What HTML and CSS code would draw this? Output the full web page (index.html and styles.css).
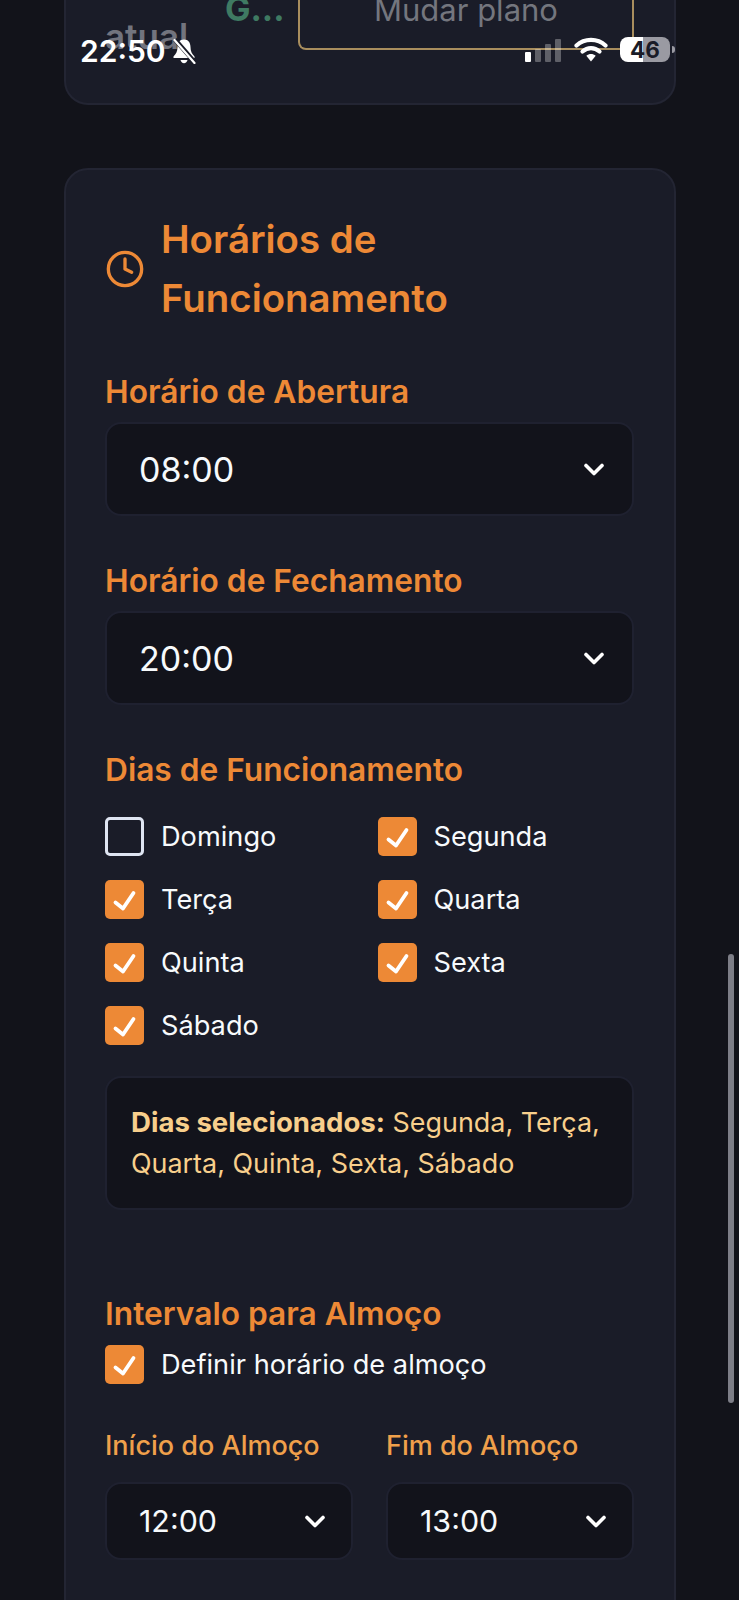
FILE: index.html
```html
<!DOCTYPE html>
<html lang="pt-BR">
<head>
  <meta charset="UTF-8" />
  <meta name="viewport" content="width=device-width, initial-scale=1.0"/>
  <title>Horários de Funcionamento</title>
  <link rel="stylesheet" href="styles.css">
</head>
<body>

  <svg class="defs" aria-hidden="true">
    <symbol id="tick" viewBox="0 0 39 39">
      <path d="M10.5 22.500l7.500 6 10.500-15.500" fill="none" stroke="#fff" stroke-width="3.800" stroke-linecap="round" stroke-linejoin="round"/>
    </symbol>
    <symbol id="chevron" viewBox="0 0 20 13">
      <path d="M2 2.500l8 8 8-8" fill="none" stroke="#fff" stroke-width="3.600" stroke-linecap="round" stroke-linejoin="round"/>
    </symbol>
  </svg>

  <div class="status-bar">
    <div class="status-left">
      <span class="status-time">22:50</span>
      <svg class="bell" viewBox="0 0 24 26">
        <path d="M12 1.500c-4.500 0-6.500 3.500-6.500 7.500 0 4.500-1.500 7-4 9.500v1.500h21v-1.500c-2.500-2.500-4-5-4-9.500 0-4-2-7.500-6.500-7.500z" fill="#fff"/>
        <path d="M8.500 22h7c-.4 2-1.800 3.200-3.500 3.200s-3.100-1.200-3.500-3.200z" fill="#fff"/>
        <path d="M3 1.500l20 23" stroke="#1a1c28" stroke-width="4.500"/>
        <path d="M2.500 2l20 23" stroke="#fff" stroke-width="2.200" stroke-linecap="round"/>
      </svg>
    </div>
    <div class="status-right">
      <div class="signal">
        <i class="bar bar-1"></i>
        <i class="bar bar-2"></i>
        <i class="bar bar-3"></i>
        <i class="bar bar-4"></i>
      </div>
      <svg class="wifi" viewBox="0 0 34 25">
        <path d="M2.500 8.500c8-7.500 21-7.500 29 0" fill="none" stroke="#fff" stroke-width="4.200" stroke-linecap="round"/>
        <path d="M8.500 14.500c5-4.500 12-4.500 17 0" fill="none" stroke="#fff" stroke-width="4.200" stroke-linecap="round"/>
        <path d="M12.300 18.800c2.800-2.300 6.600-2.300 9.400 0L17 24.500z" fill="#fff"/>
      </svg>
      <div class="battery"><span>46</span></div>
      <i class="battery-nub"></i>
    </div>
  </div>

  <div class="scrollbar"></div>

  <main class="page">

    <section class="card card-plan">
      <div class="plan-row">
        <span class="plan-current">atual</span>
        <span class="plan-status">G...</span>
        <div class="plan-btn">Mudar plano</div>
      </div>
    </section>

    <section class="card card-hours">
      <div class="card-title">
        <svg class="clock" viewBox="0 0 24 24" fill="none" stroke="#ed8936" stroke-width="2" stroke-linecap="round" stroke-linejoin="round">
          <circle cx="12" cy="12" r="10"/>
          <path d="M12 6v6l4 2"/>
        </svg>
        <h2>Horários de Funcionamento</h2>
      </div>

      <div class="field">
        <label class="field-label">Horário de Abertura</label>
        <div class="select">
          <span>08:00</span>
          <svg class="chevron"><use href="#chevron"/></svg>
        </div>
      </div>

      <div class="field">
        <label class="field-label">Horário de Fechamento</label>
        <div class="select">
          <span>20:00</span>
          <svg class="chevron"><use href="#chevron"/></svg>
        </div>
      </div>

      <div class="field">
        <label class="field-label">Dias de Funcionamento</label>
        <div class="days-grid">
          <div class="check-row"><span class="box"></span>Domingo</div>
          <div class="check-row"><span class="box checked"><svg><use href="#tick"/></svg></span>Segunda</div>
          <div class="check-row"><span class="box checked"><svg><use href="#tick"/></svg></span>Terça</div>
          <div class="check-row"><span class="box checked"><svg><use href="#tick"/></svg></span>Quarta</div>
          <div class="check-row"><span class="box checked"><svg><use href="#tick"/></svg></span>Quinta</div>
          <div class="check-row"><span class="box checked"><svg><use href="#tick"/></svg></span>Sexta</div>
          <div class="check-row"><span class="box checked"><svg><use href="#tick"/></svg></span>Sábado</div>
        </div>
        <div class="days-info">
          <strong>Dias selecionados:</strong> Segunda, Terça, Quarta, Quinta, Sexta, Sábado
        </div>
      </div>

      <div class="lunch">
        <label class="field-label lunch-label">Intervalo para Almoço</label>
        <div class="check-row"><span class="box checked"><svg><use href="#tick"/></svg></span>Definir horário de almoço</div>
        <div class="lunch-grid">
          <div>
            <label class="sub-label">Início do Almoço</label>
            <div class="select select-small">
              <span>12:00</span>
              <svg class="chevron"><use href="#chevron"/></svg>
            </div>
          </div>
          <div>
            <label class="sub-label">Fim do Almoço</label>
            <div class="select select-small">
              <span>13:00</span>
              <svg class="chevron"><use href="#chevron"/></svg>
            </div>
          </div>
        </div>
      </div>
    </section>

  </main>

</body>
</html>
```

FILE: styles.css
```css
:root {
  --bg-color: #12131a;
  --card-bg: #1a1c28;
  --card-border: #232533;
  --select-bg: #12131b;
  --select-border: #1f2130;
  --orange: #ed8936;
  --orange-light: #f0a04b;
  --info-text: #f8cf8c;
  --text-color: #f7fafc;
}

* {
  box-sizing: border-box;
}

html, body {
  margin: 0;
  padding: 0;
  height: 1600px;
  overflow: hidden;
}

body {
  position: relative;
  font-family: Inter, 'Noto Sans', sans-serif;
  background: var(--bg-color);
  color: var(--text-color);
}

.defs {
  position: absolute;
  width: 0;
  height: 0;
}

.page {
  display: flex;
  flex-direction: column;
  gap: 63px;
  padding: 0 63px 0 64px;
}

.card {
  background: var(--card-bg);
  border: 2px solid var(--card-border);
  border-radius: 24px;
}

/* plan card, scrolled mostly out of view */
.card-plan {
  height: 105px;
  border-top: none;
  border-radius: 0 0 24px 24px;
  padding: 0 40px 0 39px;
  overflow: hidden;
}

.plan-row {
  display: flex;
  align-items: flex-end;
  height: 50px;
}

.plan-current {
  width: 124px;
  margin-right: -4px;
  font-size: 35px;
  line-height: 36px;
  font-weight: 600;
  color: #72747e;
  transform: translateY(4px);
}

.plan-status {
  width: 73px;
  align-self: flex-start;
  margin-top: -11px;
  font-size: 34px;
  line-height: 40px;
  font-weight: 700;
  color: #3f7a62;
}

.plan-btn {
  flex: 1;
  height: 60px;
  border: 2px solid #a98e5e;
  border-top: none;
  border-radius: 0 0 8px 8px;
  color: #74767e;
  font-size: 31px;
  line-height: 40px;
  text-align: center;
  display: flex;
  align-items: flex-start;
  justify-content: center;
}

.card-hours {
  padding: 40px 40px 60px 39px;
  min-height: 1500px;
}

.card-title {
  display: flex;
  align-items: center;
  gap: 16px;
  margin-bottom: 44px;
}

.clock {
  width: 40px;
  height: 40px;
  flex: none;
}

.card-title h2 {
  margin: 0;
  font-size: 38.4px;
  line-height: 59px;
  font-weight: 600;
  color: var(--orange);
}

.field {
  margin-bottom: 45px;
}

.field-label {
  display: block;
  font-size: 31.7px;
  line-height: 40px;
  font-weight: 600;
  color: var(--orange);
  margin-bottom: 10px;
}

.select {
  display: flex;
  align-items: center;
  justify-content: space-between;
  height: 94px;
  padding: 0 28px 0 32px;
  background: var(--select-bg);
  border: 2px solid var(--select-border);
  border-radius: 16px;
  font-size: 34px;
}

.chevron {
  width: 20px;
  height: 13px;
}

.days-grid {
  display: grid;
  grid-template-columns: 1fr 1fr;
  column-gap: 16px;
  row-gap: 24px;
  margin-top: 27px;
}

.check-row {
  display: flex;
  align-items: center;
  gap: 17px;
  font-size: 27.2px;
  line-height: 39px;
}

.box {
  width: 39px;
  height: 39px;
  flex: none;
  border: 3px solid #dfe5f2;
  border-radius: 5px;
}

.box.checked {
  background: var(--orange);
  border: none;
}

.box svg {
  display: block;
  width: 39px;
  height: 39px;
}

.days-info {
  margin-top: 31px;
  padding: 24px 24px;
  background: var(--select-bg);
  border: 2px solid var(--select-border);
  border-radius: 16px;
  font-size: 26.9px;
  line-height: 41px;
  color: var(--info-text);
}

.days-info strong {
  font-size: 27.6px;
  font-weight: 700;
}

.lunch {
  margin-top: 84px;
}

.lunch-label {
  margin-bottom: 11px;
}

.lunch-grid {
  display: grid;
  grid-template-columns: 1fr 1fr;
  column-gap: 33px;
  margin-top: 42px;
}

.sub-label {
  display: block;
  font-size: 27px;
  line-height: 40px;
  font-weight: 500;
  color: var(--orange-light);
  margin-bottom: 16px;
}

.select-small {
  height: 78px;
  padding-right: 26px;
  font-size: 30.4px;
}

/* phone chrome lying over the page */
.status-bar {
  position: absolute;
  top: 0;
  left: 0;
  right: 0;
  height: 80px;
  z-index: 5;
}

.status-left {
  position: absolute;
  left: 80px;
  top: 34px;
  display: flex;
  align-items: center;
  gap: 6px;
}

.status-time {
  font-size: 30px;
  line-height: 34px;
  font-weight: 600;
  color: #fff;
}

.bell {
  width: 24px;
  height: 26px;
}

.status-right {
  position: absolute;
  left: 525px;
  top: 37px;
  display: flex;
  align-items: flex-end;
}

.signal {
  display: flex;
  align-items: flex-end;
  gap: 4px;
  height: 24px;
  margin-right: 13px;
}

.bar {
  width: 6px;
  background: rgba(255, 255, 255, 0.3);
  border-radius: 1px;
}

.bar-1 { height: 10px; background: #fff; }
.bar-2 { height: 13px; }
.bar-3 { height: 18px; }
.bar-4 { height: 23px; }

.wifi {
  width: 34px;
  height: 25px;
  margin-right: 12px;
}

.battery {
  width: 50px;
  height: 25px;
  border-radius: 8px;
  background: linear-gradient(90deg, #fff 45%, #9a9aa2 45%);
  color: #1a1c28;
  font-size: 22.500px;
  line-height: 25px;
  font-weight: 700;
  text-align: center;
}

.battery-nub {
  width: 3px;
  height: 7px;
  margin: 0 0 9px 2px;
  background: #9a9aa2;
  border-radius: 0 3px 3px 0;
}

.scrollbar {
  position: absolute;
  left: 728px;
  top: 954px;
  width: 6px;
  height: 449px;
  border-radius: 3px;
  background: #7d7e87;
  z-index: 5;
}
```
